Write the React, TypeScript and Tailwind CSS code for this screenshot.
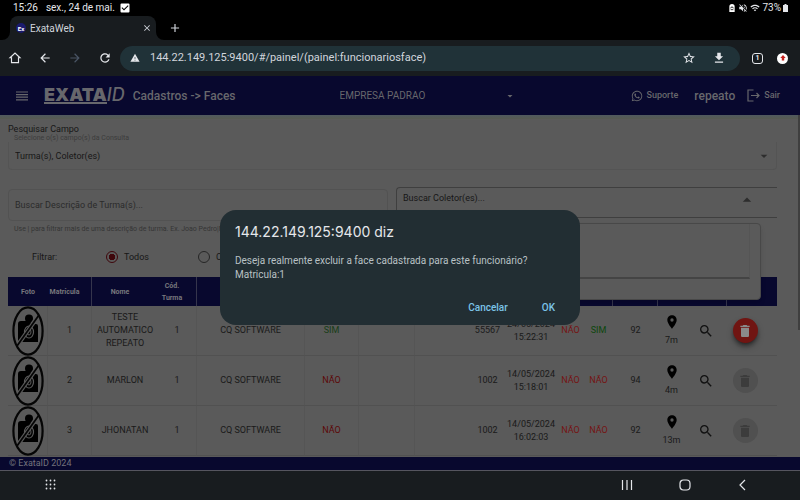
import React from "react";
import {
  MdAdd,
  MdArrowBack,
  MdArrowDropDown,
  MdArrowDropUp,
  MdArrowForward,
  MdCheckBox,
  MdClose,
  MdDelete,
  MdDownload,
  MdPlace,
  MdRefresh,
  MdSearch,
  MdStarBorder,
  MdVolumeOff,
  MdWarning,
  MdWifi,
} from "react-icons/md";
import { FaWhatsapp } from "react-icons/fa";
import { LogOut } from "lucide-react";

type Row = {
  matricula: number;
  nome: string;
  turma: string;
  face: boolean;
  codigo: string;
  data: string;
  hora: string;
  a: boolean;
  b: boolean;
  valor: string;
  distancia: string;
  excluir: boolean;
};

const rows: Row[] = [
  { matricula: 1, nome: "TESTE AUTOMATICO REPEATO", turma: "1", face: true, codigo: "55567", data: "24/05/2024", hora: "15:22:31", a: false, b: true, valor: "92", distancia: "7m", excluir: true },
  { matricula: 2, nome: "MARLON", turma: "1", face: false, codigo: "1002", data: "14/05/2024", hora: "15:18:01", a: false, b: false, valor: "94", distancia: "4m", excluir: false },
  { matricula: 3, nome: "JHONATAN", turma: "1", face: false, codigo: "1002", data: "14/05/2024", hora: "16:02:03", a: false, b: false, valor: "92", distancia: "13m", excluir: false },
];

const columnWidths = [40, 44, 66, 39, 108, 54, 56, 55, 35, 52, 27, 29, 45, 27, 42, 50];
const headings = ["Foto", "Matrícula", "Nome", "Cód. Turma", "", "", "", "", "", "", "", "", "", "", "", ""];

function headingClass(i: number) {
  if (i === 1 || i === 3) return "border-r border-[#35354c] p-0 pr-2.5 font-bold";
  if (i === 2) return "p-0 pr-2.5 font-bold";
  if ([5, 11, 12, 14].includes(i)) return "border-r border-[#35354c] p-0";
  return "p-0 font-bold";
}

function StatusBar() {
  return (
    <div className="flex h-4 items-center bg-black px-3 text-[10px] leading-4 text-gray-200">
      <span className="pl-px">15:26</span>
      <span className="pl-2">sex., 24 de mai.</span>
      <MdCheckBox className="ml-1 size-3 text-white" />
      <span className="ml-auto flex items-center gap-0.5">
        <svg viewBox="0 0 10 12" className="h-2 w-2">
          <path d="M1 12V4a4 4 0 0 1 8 0v8z" fill="#fff" />
          <path d="M3 6.500a2 2 0 0 1 4 0M3 8.500h4" stroke="#000" strokeWidth="1.200" fill="none" />
        </svg>
        <MdVolumeOff className="size-2.5" />
        <MdWifi className="size-2.5" />
        73%
        <svg viewBox="0 0 5 8" className="h-2 w-[5px]" fill="currentColor">
          <path d="M1.500 0h2v1H5v7H0V1h1.500z" />
        </svg>
      </span>
    </div>
  );
}

function TabStrip() {
  return (
    <div className="flex h-6 items-end bg-black pl-0.5">
      <svg viewBox="0 0 8 8" className="size-2 text-[#181c1f]">
        <path d="M8 0v8H0a8 8 0 0 0 8-8z" fill="currentColor" />
      </svg>
      <div className="flex h-6 w-[146px] items-center rounded-t-lg bg-[#181c1f] pr-1 pl-1.5 text-[10px] text-gray-300">
        <span className="flex size-2.5 items-center justify-center rounded-full bg-[#1b1b6e] text-[6px] font-bold text-white">Ex</span>
        <span className="ml-1">ExataWeb</span>
        <button aria-label="Fechar guia" className="ml-auto">
          <MdClose className="size-2.5" />
        </button>
      </div>
      <svg viewBox="0 0 8 8" className="size-2 text-[#181c1f]">
        <path d="M0 0v8h8a8 8 0 0 1-8-8z" fill="currentColor" />
      </svg>
      <button aria-label="Nova guia" className="flex h-6 items-center pl-1">
        <MdAdd className="size-3.5 text-gray-300" />
      </button>
    </div>
  );
}

function Toolbar() {
  return (
    <div className="flex h-9 items-center bg-[#181c1f] text-gray-200">
      <div className="flex w-[120px] items-center justify-between pr-2 pl-2">
        <button aria-label="Página inicial">
          <svg viewBox="0 0 24 24" className="size-3.5" fill="none" stroke="currentColor" strokeWidth="2">
            <path d="M3.500 11.500L12 3.500l8.500 8H18V20H6v-8.500z" />
          </svg>
        </button>
        <button aria-label="Voltar"><MdArrowBack className="size-3.5" /></button>
        <button aria-label="Avançar"><MdArrowForward className="size-3.5 text-gray-600" /></button>
        <button aria-label="Recarregar"><MdRefresh className="size-3.5" /></button>
      </div>
      <div className="flex h-[25px] flex-1 items-center rounded-full bg-[#203238] pr-3.5 pl-2.5">
        <MdWarning className="size-2.5 shrink-0" />
        <input
          aria-label="Endereço"
          className="mx-2.5 min-w-0 flex-1 bg-transparent text-[11px] leading-4 text-gray-300 outline-none"
          defaultValue="144.22.149.125:9400/#/painel/(painel:funcionariosface)"
        />
        <button aria-label="Favoritar"><MdStarBorder className="size-3.5" /></button>
        <button aria-label="Downloads" className="ml-4"><MdDownload className="size-3.5" /></button>
      </div>
      <button aria-label="Guias abertas" className="ml-3 flex size-[11px] items-center justify-center rounded-[3px] border border-gray-200 text-[7px] leading-none font-bold">1</button>
      <button aria-label="Atualizar navegador" className="mr-3 ml-3.5 flex size-[11px] items-center justify-center rounded-full bg-white">
        <svg viewBox="0 0 10 10" className="size-1.5">
          <path d="M5 0l4.500 5H7v4H3V5H.5z" fill="#c5221f" />
        </svg>
      </button>
    </div>
  );
}

function AppHeader() {
  return (
    <header className="flex h-[39px] items-center bg-[#08082e] px-4 text-[#67676c]">
      <button aria-label="Menu">
        <svg viewBox="0 0 12 10" className="h-2.5 w-3" stroke="currentColor" strokeWidth="1.200">
          <path d="M0 1h12M0 3.600h12M0 6.200h12M0 8.800h12" />
        </svg>
      </button>
      <div className="ml-4 flex items-start font-['Inter',sans-serif] text-[18px] leading-[14px]">
        <span className="border-b-2 border-[#67676c] font-black">EXATA</span>
        <span className="font-medium italic">ID</span>
      </div>
      <h1 className="ml-2 text-[12px] font-medium">Cadastros -&gt; Faces</h1>
      <div className="relative ml-[104px] flex w-[176px] items-center">
        <select aria-label="Empresa" className="w-full appearance-none bg-transparent text-[10px] leading-4">
          <option>EMPRESA PADRAO</option>
        </select>
        <MdArrowDropDown className="pointer-events-none absolute right-0 size-3" />
      </div>
      <a href="#suporte" className="ml-auto flex items-center gap-1 text-[9px] font-medium">
        <FaWhatsapp className="size-3" />
        Suporte
      </a>
      <span className="ml-4 text-[12px] font-medium">repeato</span>
      <a href="#sair" className="mr-1 ml-3 flex items-center gap-1 text-[9px] font-medium">
        <svg viewBox="0 0 13 13" className="size-[13px]" fill="none" stroke="currentColor" strokeWidth="1.200">
          <path d="M6.500 1H1v11h5.500M4 6.500h8M9.500 4L12 6.500 9.500 9" />
        </svg>
        Sair
      </a>
    </header>
  );
}

function Filters() {
  return (
    <div className="mr-[21px] ml-2 text-[9px] leading-3 text-[#171717]">
      <p className="pt-1">Pesquisar Campo</p>
      <label htmlFor="campos" className="block pl-1.5 text-[7px] leading-[7px] text-[#3c3c3c]">Selecione o(s) campo(s) da Consulta</label>
      <div className="relative flex h-7 items-center rounded-b border border-t-0 border-[#545454]">
        <select id="campos" className="w-full appearance-none bg-transparent pl-1.5">
          <option>Turma(s), Coletor(es)</option>
        </select>
        <MdArrowDropDown className="pointer-events-none absolute right-1 size-4 text-[#2d2d2d]" />
      </div>
      <div className="mt-[17px] flex items-start gap-2">
        <div className="mt-0.5 flex-1">
          <input
            aria-label="Buscar Descrição de Turma(s)"
            placeholder="Buscar Descrição de Turma(s)..."
            className="block h-8 w-full rounded border border-[#525252] bg-transparent px-1.5 outline-none placeholder:text-[#2b2b2b]"
          />
          <p className="mt-0.5 w-[250px] truncate pl-1.5 text-[7px] leading-3 text-[#353535]">
            Use | para filtrar mais de uma descrição de turma. Ex. Joao Pedro|Maria
          </p>
        </div>
        <div className="relative h-[31px] flex-1 rounded-l-sm border-y border-l border-[#3f3f3f]">
          <select aria-label="Coletor" className="h-5 w-full appearance-none bg-transparent pl-1.5">
            <option>Buscar Coletor(es)...</option>
          </select>
          <MdArrowDropUp className="pointer-events-none absolute top-0.5 right-5 size-5 text-[#2d2d2d]" />
          <div className="absolute top-[35px] right-4 left-0 h-[77px] rounded-sm border border-[#484848] bg-[#5a5a5a] pr-2.5 shadow-md">
            <div className="h-[55px] border-r border-b-2 border-r-[#555555] border-b-[#444444]" />
          </div>
        </div>
      </div>
      <fieldset className="flex h-[42px] items-center pt-3 pb-2.5 pl-6">
        <span className="w-[74px]">Filtrar:</span>
        <label className="flex w-[92px] items-center gap-1.5">
          <input type="radio" name="filtro" defaultChecked className="size-3 appearance-none rounded-full border border-[#3f070c] checked:bg-[radial-gradient(#3f070c_45%,transparent_50%)]" />
          Todos
        </label>
        <label className="flex items-center gap-1.5 whitespace-nowrap">
          <input type="radio" name="filtro" className="size-3 appearance-none rounded-full border border-[#262626]" />
          Com Face
        </label>
      </fieldset>
    </div>
  );
}

function NoPhoto() {
  return (
    <svg viewBox="0 0 32 50" className="mx-auto h-[50px] w-8" aria-label="Sem foto">
      <circle cx="17" cy="12.500" r="4" />
      <path d="M6 18q0-3 3-3h8l4 3h3q2 0 2 2v16H8q-2 0-2-2z" />
      <ellipse cx="17" cy="26" rx="4.500" ry="6" fill="none" stroke="#5a5a5a" strokeWidth="1.200" />
      <ellipse cx="17" cy="26" rx="2" ry="3" fill="none" stroke="#5a5a5a" />
      <path d="M5 40L27 9" stroke="#5a5a5a" strokeWidth="4" />
      <path d="M5 40L27 9" stroke="#050505" strokeWidth="1.800" />
      <ellipse cx="16" cy="25" rx="14.600" ry="23.600" fill="none" stroke="#050505" strokeWidth="2.200" />
    </svg>
  );
}

function Flag({ on, light }: { on: boolean; light?: boolean }) {
  if (on) return <span className={light ? "text-[#0c470c]" : "text-[#173d17]"}>SIM</span>;
  return <span className={light ? "text-[#751414]" : "text-[#5c0808]"}>NÃO</span>;
}

function FacesTable() {
  const line = "border-r border-r-[#555555]";
  return (
    <div className="mr-[21px] ml-2">
      <table className="w-full table-fixed border-separate border-spacing-0 text-center text-[9px] leading-[13px] text-[#191919]">
        <colgroup>
          {columnWidths.map((width, i) => (
            <col key={i} style={{ width }} />
          ))}
        </colgroup>
        <thead>
          <tr className="h-[29px] bg-[#08082e] text-[7px] leading-3 text-[#77777c]">
            {headings.map((heading, i) => (
              <th key={i} className={headingClass(i)}>
                {heading}
              </th>
            ))}
          </tr>
        </thead>
        <tbody>
          {rows.map((row) => (
            <tr key={row.matricula} className="h-[50px] *:border-b *:border-b-[#515151] *:p-0">
              <td className={line}><div className="h-[49px]"><NoPhoto /></div></td>
              <td className={line}>{row.matricula}</td>
              <td>{row.nome}</td>
              <td className={line}>{row.turma}</td>
              <td className={line}>CQ SOFTWARE</td>
              <td className={line}><Flag on={row.face} /></td>
              <td className={line} />
              <td />
              <td>{row.codigo}</td>
              <td>{row.data}<br />{row.hora}</td>
              <td><Flag on={row.a} light /></td>
              <td><Flag on={row.b} light /></td>
              <td>{row.valor}</td>
              <td>
                <MdPlace className="mx-auto size-4 text-black" />
                <span className="block pt-1">{row.distancia}</span>
              </td>
              <td><button aria-label="Visualizar" className="block w-full"><MdSearch className="mx-auto size-4 text-[#111111]" /></button></td>
              <td>
                <button
                  aria-label="Excluir face"
                  disabled={!row.excluir}
                  className={
                    row.excluir
                      ? "mr-3.5 inline-flex size-[25px] items-center justify-center rounded-full bg-[#701512] text-[#8a8a8a] shadow-md shadow-black/50"
                      : "mr-3.5 inline-flex size-[25px] items-center justify-center rounded-full bg-[#505050] text-[#3c3c3c]"
                  }
                >
                  <MdDelete className="size-4" />
                </button>
              </td>
            </tr>
          ))}
        </tbody>
      </table>
    </div>
  );
}

function ConfirmDialog() {
  return (
    <div className="absolute inset-0 flex items-center justify-center pb-3">
      <div role="dialog" aria-labelledby="dialog-title" className="w-[360px] rounded-2xl bg-[#222e33] px-[15px] pt-3 pb-2">
        <h2 id="dialog-title" className="font-['Inter',sans-serif] text-[14px] leading-5 text-gray-200">144.22.149.125:9400 diz</h2>
        <p className="mt-3 text-[10px] leading-[14px] text-[#b9c1c5]">
          Deseja realmente excluir a face cadastrada para este funcionário?
          <br />
          Matricula:1
        </p>
        <div className="mt-4 flex justify-end gap-6 pr-1 text-[10px] leading-[19px] font-medium text-[#7cc4e8]">
          <button className="px-1">Cancelar</button>
          <button className="px-1.5">OK</button>
        </div>
      </div>
    </div>
  );
}

function SystemNav() {
  return (
    <nav className="flex h-[29px] items-center bg-[#181c1f] pr-[51px] pb-0.5 pl-[45px] text-gray-200">
      <button aria-label="Aplicativos">
        <svg viewBox="0 0 11 11" className="size-[11px]" fill="currentColor">
          {[1.5, 5.5, 9.5].map((y) => [1.5, 5.5, 9.5].map((x) => <circle key={`${x}-${y}`} cx={x} cy={y} r="0.900" />))}
        </svg>
      </button>
      <div className="ml-auto flex items-center gap-[46px]">
        <button aria-label="Recentes">
          <svg viewBox="0 0 12 12" className="size-3" stroke="currentColor" strokeWidth="1.200"><path d="M1.500 1v10M6 1v10M10.500 1v10" /></svg>
        </button>
        <button aria-label="Início">
          <svg viewBox="0 0 12 12" className="size-3" fill="none" stroke="currentColor" strokeWidth="1.200"><rect x="1" y="1" width="10" height="10" rx="3.500" /></svg>
        </button>
        <button aria-label="Voltar ao app anterior">
          <svg viewBox="0 0 12 12" className="size-3" fill="none" stroke="currentColor" strokeWidth="1.200"><path d="M8 1L3 6l5 5" /></svg>
        </button>
      </div>
    </nav>
  );
}

export default function App() {
  return (
    <div className="flex h-screen flex-col overflow-hidden bg-black font-['Roboto',sans-serif]">
      <StatusBar />
      <TabStrip />
      <Toolbar />
      <div className="relative flex min-h-0 flex-1 flex-col">
        <AppHeader />
        <div className="flex min-h-0 flex-1 bg-[#5a5a5a]">
          <main className="min-w-0 flex-1 overflow-hidden">
            <div className="-mr-0.5 h-1 bg-linear-to-b from-[#50595f] to-[#575a50]" />
            <Filters />
            <FacesTable />
          </main>
          <div className="h-[215px] w-0.5 bg-[#3f3f3f]" />
        </div>
        <footer className="h-[14px] border-b border-[#55555f] bg-[#08082e] pl-[9px] text-[9px] leading-3 text-[#73737c]">© ExataID 2024</footer>
        <ConfirmDialog />
      </div>
      <SystemNav />
    </div>
  );
}
